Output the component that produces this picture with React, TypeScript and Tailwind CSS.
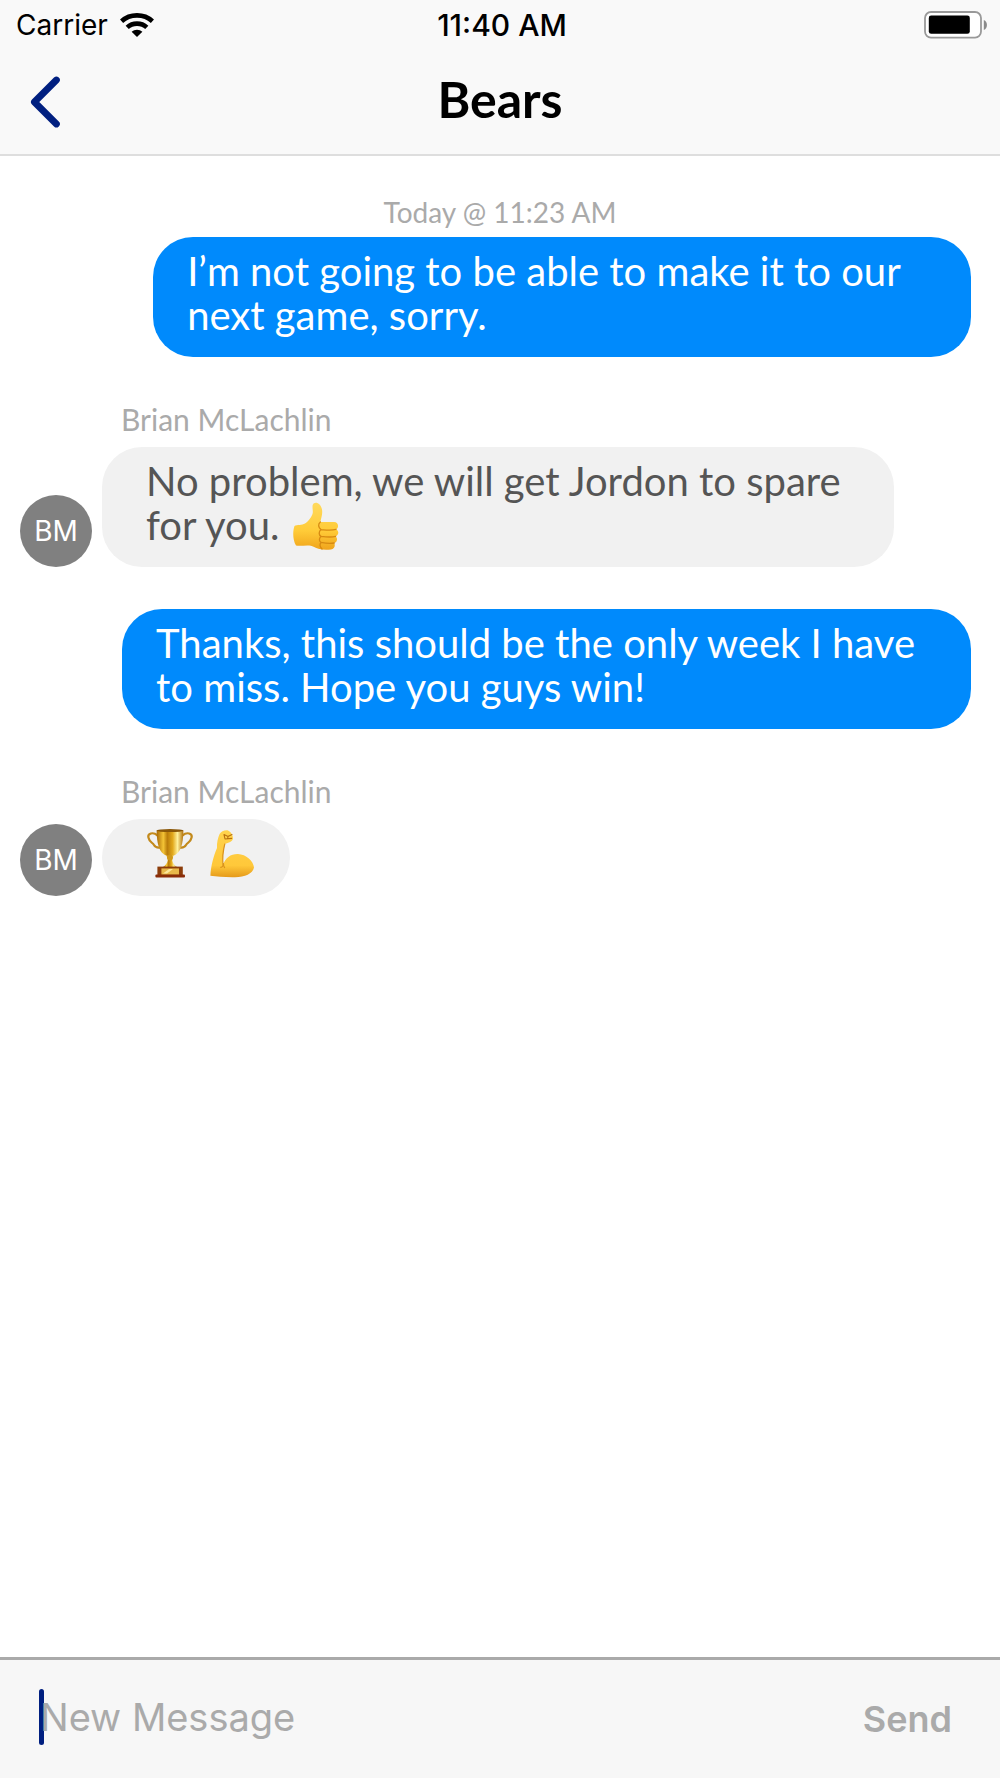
import React, { useState } from 'react';

interface Message {
  id: number;
  author: string | null;
  text: string;
  emoji?: EmojiName[];
  widthClass?: string;
}

type EmojiName = 'thumbsUp' | 'trophy' | 'biceps';

const messages: Message[] = [
  {
    id: 1,
    author: null,
    text: 'I’m not going to be able to make it to our\nnext game, sorry.',
    widthClass: 'w-[86%]',
  },
  {
    id: 2,
    author: 'Brian McLachlin',
    text: 'No problem, we will get Jordon to spare\nfor you. ',
    emoji: ['thumbsUp'],
  },
  {
    id: 3,
    author: null,
    text: 'Thanks, this should be the only week I have\nto miss. Hope you guys win!',
  },
  {
    id: 4,
    author: 'Brian McLachlin',
    text: '',
    emoji: ['trophy', 'biceps'],
  },
];

const getInitials = (name: string) =>
  name
    .split(' ')
    .map((part) => part[0])
    .join('');

const WifiIcon: React.FC = () => (
  <svg width="34" height="24" viewBox="0 0 34 24" fill="none" aria-hidden="true">
    <path d="M1.6 8.2C10 .4 24 .4 32.4 8.2" stroke="#000" strokeWidth="4.6" />
    <path d="M7.2 14.4C12.6 9.4 21.4 9.4 26.8 14.4" stroke="#000" strokeWidth="4.6" />
    <path d="M11.6 18.8C14.6 16 19.4 16 22.4 18.8L17 24Z" fill="#000" />
  </svg>
);

const BatteryIcon: React.FC = () => (
  <svg width="64" height="28" viewBox="0 0 64 28" aria-hidden="true">
    <rect x="1" y="1" width="56" height="25.6" rx="6" fill="#fff" stroke="#999" strokeWidth="1.8" />
    <rect x="4.8" y="4.6" width="41" height="18.2" rx="2.4" fill="#000" />
    <path d="M59.8 9C64 10.6 64 17.4 59.8 19Z" fill="#8a8a8a" />
  </svg>
);

const BackIcon: React.FC = () => (
  <svg width="30" height="52" viewBox="0 0 30 52" fill="none" aria-hidden="true">
    <path
      d="M26.4 4L4.4 26L26.4 48"
      stroke="#001f80"
      strokeWidth="6.8"
      strokeLinecap="round"
      strokeLinejoin="round"
    />
  </svg>
);

const ThumbsUp: React.FC = () => (
  <svg
    className="-mt-4 -mb-2 ml-[2px] inline-block align-middle"
    width="48"
    height="48"
    viewBox="0 0 48 48"
    role="img"
    aria-label="Thumbs up"
  >
    <defs>
      <linearGradient id="thumb" x1="0" y1="0" x2="0" y2="1">
        <stop offset="0" stopColor="#ffd95c" />
        <stop offset="0.6" stopColor="#ffcb38" />
        <stop offset="1" stopColor="#f0a41c" />
      </linearGradient>
    </defs>
    <path
      d="M2.5 24C5 22.6 10 23.6 13 21.6C17 18.6 20.4 14 20.8 10.4C21 7.4 19.6 3.6 21.6 1.4C24.6-.6 29 2 30 7.6C30.8 11.6 29.2 16 28.4 20L42 20C47 20 47 26.6 44 27.4C47.4 28.4 46.8 33.4 43.6 34.4C46 35.8 45.2 40.4 42.2 41C43.6 43.4 42.4 47 39 47.4C33 48.2 26 47.6 21.6 44.8C17.6 42.2 9 44.6 4 43.6C.6 38 .6 29 2.5 24Z"
      fill="url(#thumb)"
    />
    <path
      d="M44 27.4C39 28.8 34 28 29 27.6M43.6 34.4C39 35.6 34 35 29 34.4M42.2 41C38 41.8 33 41.2 29 40.4M28.4 20C25.6 22 26.4 26 29 27.6C26.4 30 26.8 33 29 34.4C26.8 36.6 27 39 29 40.4C27.4 42.6 28 45 30 47"
      fill="none"
      stroke="#d78a12"
      strokeWidth="1.3"
      strokeLinecap="round"
    />
  </svg>
);

const Trophy: React.FC = () => (
  <svg
    className="inline-block align-middle"
    width="48"
    height="50"
    viewBox="0 0 48 50"
    role="img"
    aria-label="Trophy"
  >
    <defs>
      <linearGradient id="cup" x1="0" y1="0" x2="1" y2="0">
        <stop offset="0" stopColor="#a86a06" />
        <stop offset="0.25" stopColor="#f4c436" />
        <stop offset="0.4" stopColor="#b97c0a" />
        <stop offset="0.6" stopColor="#e2a91c" />
        <stop offset="0.78" stopColor="#fff09a" />
        <stop offset="1" stopColor="#b0700a" />
      </linearGradient>
    </defs>
    <path
      d="M11.4 7.4C7 3.4 1.4 5.6 2.4 9.4C3.4 14 6.4 14.4 8 17C9.4 19.4 11.6 20 14.6 19.4M36.6 7.4C41 3.4 46.6 5.6 45.6 9.4C44.6 14 41.6 14.4 40 17C38.6 19.4 36.4 20 33.4 19.4"
      fill="none"
      stroke="#c38a1c"
      strokeWidth="2.2"
      strokeLinecap="round"
    />
    <path d="M10.6 2.6C11 16 12.6 24.6 21 28L27 28C35.4 24.6 37 16 37.4 2.6Z" fill="url(#cup)" />
    <ellipse cx="24" cy="2.6" rx="13.4" ry="1.5" fill="#8a5708" />
    <path d="M20.4 27.6L27.6 27.6L26.2 32C26.6 35 28.4 37.4 31 39L17 39C19.6 37.4 21.4 35 21.8 32Z" fill="url(#cup)" />
    <circle cx="24" cy="29.6" r="2.9" fill="#d19918" />
    <rect x="11.4" y="38.6" width="25.4" height="9" fill="#8c3d0a" />
    <rect x="9.4" y="46.6" width="29.6" height="3" rx="1" fill="#8a2c08" />
    <path d="M15.4 40.4L33 40.4L33 46.4L15.4 46.4Z" fill="#e8b84a" />
    <path d="M17 45.4L23 41L27 41L21 45.4Z" fill="#fbe69a" />
  </svg>
);

const Biceps: React.FC = () => (
  <svg
    className="inline-block align-middle"
    width="48"
    height="50"
    viewBox="0 0 48 50"
    role="img"
    aria-label="Flexed biceps"
  >
    <defs>
      <linearGradient id="arm" x1="0" y1="0" x2="0" y2="1">
        <stop offset="0" stopColor="#ffd34d" />
        <stop offset="0.75" stopColor="#ffc83a" />
        <stop offset="1" stopColor="#e59a1a" />
      </linearGradient>
    </defs>
    <path
      d="M2.4 47.8C2.8 38 5.6 28 9 20C8.6 15 10 9.6 11.6 6C13 3.4 16 2 19.4 2.2C22.4 3.4 25 6.6 25 10.4C24.6 13.6 20.6 14.6 16.8 16C15.2 22 14.4 31 15 37.6C17 29.6 23 25.8 30 26C38 26.4 45.6 33 46 39.6C44.6 46 37 49 27 49.2C17 49.4 9 48.4 2.4 47.8Z"
      fill="url(#arm)"
    />
    <path
      d="M16 6.6L20 8.4L24 6.6M16 6.6L17 11L23.6 10.4M20 8.4L19.6 11"
      fill="none"
      stroke="#b8700f"
      strokeWidth="1.1"
      strokeLinecap="round"
      strokeLinejoin="round"
    />
    <path
      d="M16.8 16C15.2 22 14.4 31 15 37.6C14.6 38.6 13.8 39.2 12.8 39.4M15.4 35.4C15.4 37 15.8 38.4 16.6 39.6"
      fill="none"
      stroke="#d9921c"
      strokeWidth="1.2"
      strokeLinecap="round"
    />
  </svg>
);

const emojiIcons: Record<EmojiName, React.FC> = {
  thumbsUp: ThumbsUp,
  trophy: Trophy,
  biceps: Biceps,
};

const StatusBar: React.FC = () => (
  <div className="grid h-[50px] grid-cols-[1fr_auto_1fr] items-center pl-4 pr-3 font-['Inter',sans-serif] text-[28px] text-black">
    <div className="flex items-center gap-3">
      <span>Carrier</span>
      <WifiIcon />
    </div>
    <span className="text-center text-[30px] font-medium">11:40 AM</span>
    <div className="flex justify-end">
      <BatteryIcon />
    </div>
  </div>
);

const ChatBubble: React.FC<{ message: Message }> = ({ message }) => {
  const icons = (message.emoji ?? []).map((name) => {
    const Icon = emojiIcons[name];
    return <Icon key={name} />;
  });

  if (!message.author) {
    return (
      <li
        className={`self-end rounded-[40px] bg-[#008afc] pt-3 pb-5 pl-[34px] pr-14 text-white ${
          message.widthClass ?? ''
        }`}
      >
        <p className="whitespace-pre-wrap">{message.text}</p>
      </li>
    );
  }

  return (
    <li className="flex flex-col items-start">
      <span className="pl-[101px] text-[30px] leading-[40px] text-[#aaaaaa]">{message.author}</span>
      <div className="mt-2 flex items-end gap-[10px]">
        <div className="flex size-[72px] shrink-0 items-center justify-center rounded-full bg-[#808080] font-['Inter',sans-serif] text-[28px] text-white">
          {getInitials(message.author)}
        </div>
        {message.text ? (
          <div className="rounded-[40px] bg-[#f1f1f1] pt-3 pb-5 pl-11 pr-[53px] text-[#555555]">
            <p className="whitespace-pre-wrap">
              {message.text}
              {icons}
            </p>
          </div>
        ) : (
          <div className="flex h-[77px] items-start gap-[14px] rounded-[40px] bg-[#f1f1f1] pt-[9px] pl-11 pr-[34px]">
            {icons}
          </div>
        )}
      </div>
    </li>
  );
};

const App: React.FC = () => {
  const [draft, setDraft] = useState('');

  return (
    <div className="flex min-h-screen flex-col bg-white font-['Lato',sans-serif]">
      <header className="border-b-2 border-[#dedede] bg-[#f9f9f9]">
        <StatusBar />
        <div className="grid h-[104px] grid-cols-[1fr_auto_1fr] items-center px-[30px]">
          <button type="button" aria-label="Back" className="justify-self-start">
            <BackIcon />
          </button>
          <h1 className="pb-[6px] text-[50px] font-bold leading-[60px] text-black">Bears</h1>
        </div>
      </header>

      <main className="flex-1 pt-[38px]">
        <p className="text-center text-[28px] leading-[36px] text-[#aaaaaa]">Today @ 11:23 AM</p>
        <ol className="mt-[7px] flex flex-col gap-[42px] pr-[29px] pl-5 text-[40px] leading-[44px]">
          {messages.map((message) => (
            <ChatBubble key={message.id} message={message} />
          ))}
        </ol>
      </main>

      <footer className="flex h-[121px] items-center justify-between border-t-[3px] border-[#aaaaaa] bg-[#f7f7f7] pr-12 pl-[39px] font-['Inter',sans-serif]">
        <div className="relative flex flex-1 items-center pb-1">
          <span className="absolute left-0 h-14 w-[5px] rounded-full bg-[#001f80]" />
          <input
            type="text"
            aria-label="New Message"
            placeholder="New Message"
            value={draft}
            onChange={(e) => setDraft(e.target.value)}
            className="relative w-full bg-transparent pl-px text-[38px] outline-none placeholder:text-[#aaaaaa]"
          />
        </div>
        <button type="button" className="text-[36px] font-semibold text-[#aaaaaa]">
          Send
        </button>
      </footer>
    </div>
  );
};

export default App;
